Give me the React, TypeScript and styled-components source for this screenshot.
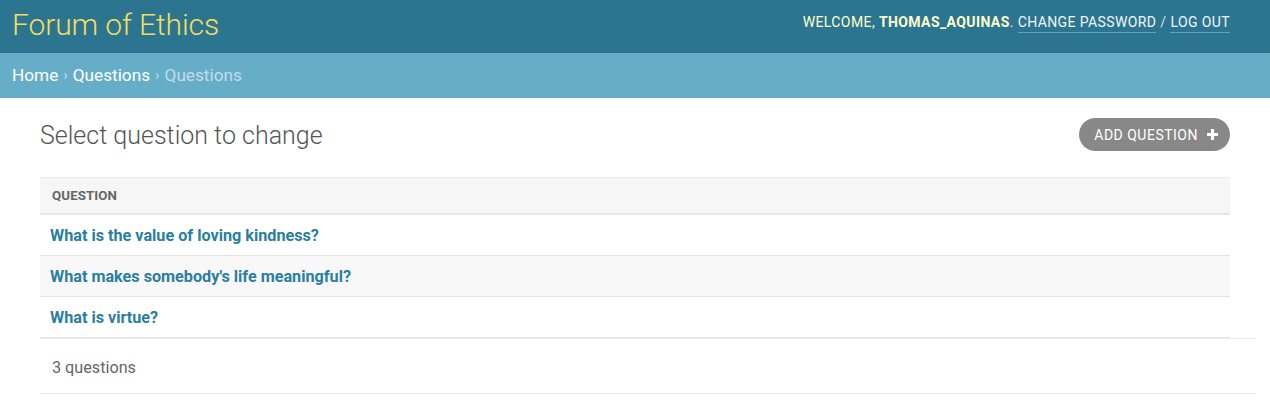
import React from 'react'
import styled, { createGlobalStyle } from 'styled-components'

const GlobalStyle = createGlobalStyle`
  html, body {
    margin: 0;
    padding: 0;
    background: #fff;
    font-family: Roboto, "Liberation Sans", Arial, sans-serif;
    color: #333;
  }
`;

const Header = styled.header`
  display: flex;
  align-items: center;
  justify-content: space-between;
  height: 53px;
  padding: 0 40px 0 12px;
  background: #2b7591;
  box-sizing: border-box;
`;

const Branding = styled.h1`
  margin: 0 0 5px;
  font-size: 30px;
  font-weight: 300;
  color: #f5dd5d;
  letter-spacing: -0.1px;
`;

const UserTools = styled.div`
  font-size: 14px;
  letter-spacing: 0.4px;
  text-transform: uppercase;
  color: #ffc;
  margin-bottom: 9px;
`;

const Strong = styled.strong`
  font-weight: 700;
`;

const UserLink = styled.a`
  color: #f2f6f8;
  text-decoration: none;
  border-bottom: 1px solid rgba(255, 255, 255, 0.3);
  padding-bottom: 2px;
`;

const Sep = styled.span`
  color: #ddd;
`;

const Breadcrumbs = styled.nav`
  height: 45px;
  display: flex;
  align-items: center;
  padding: 0 12px 2px;
  background: #66aec8;
  font-size: 17.2px;
  color: #c4dce8;
  box-sizing: border-box;
`;

const Crumb = styled.a`
  color: #fff;
  text-decoration: none;
`;

const Arrow = styled.span`
  color: #c4dce8;
  margin: 0 5px;
  font-size: 15px;
`;

const Content = styled.main`
  padding: 20px 40px 14px;
`;

const TitleRow = styled.div`
  display: flex;
  justify-content: space-between;
  align-items: center;
  margin-bottom: 26px;
`;

const Title = styled.h1`
  margin: 2px 0 0;
  font-size: 25px;
  font-weight: 300;
  color: #555;
`;

const AddButton = styled.a`
  display: flex;
  align-items: center;
  gap: 8px;
  height: 33px;
  padding: 0 11px 0 15px;
  border-radius: 17px;
  background: #888;
  color: #fff;
  font-size: 14px;
  letter-spacing: 0.5px;
  text-transform: uppercase;
  box-sizing: border-box;
  text-decoration: none;
`;

const Table = styled.table`
  width: 100%;
  border-collapse: collapse;
`;

const TH = styled.th`
  text-align: left;
  height: 35px;
  padding: 0 12px;
  background: #f6f6f6;
  border-top: 1px solid #e8e8e8;
  border-bottom: 2px solid #e6e6e6;
  font-size: 13.3px;
  font-weight: 700;
  color: #666;
  letter-spacing: 0.1px;
  text-transform: uppercase;
`;

const TR = styled.tr<{ $alt?: boolean }>`
  background: ${p => (p.$alt ? '#f8f8f8' : '#fff')};
`;

const TD = styled.td`
  height: 40px;
  padding: 0 10px;
  border-bottom: 1px solid #e4e4e4;
`;

const RowLink = styled.a`
  font-size: 16.2px;
  font-weight: 700;
  color: #2a7ea3;
  text-decoration: none;
`;

const Paginator = styled.p`
  margin: 0;
  width: calc(100% + 26px);
  box-sizing: border-box;
  padding: 2px 12px 0;
  height: 56px;
  display: flex;
  align-items: center;
  border-top: 1px solid #ececec;
  border-bottom: 1px solid #e8e8e8;
  font-size: 16.2px;
  color: #666;
`;

const questions = [
  'What is the value of loving kindness?',
  "What makes somebody's life meaningful?",
  'What is virtue?',
];

function PlusIcon() {
  return (
    <svg width="13" height="13" viewBox="0 0 13 13">
      <path d="M6.5 1v11M1 6.5h11" stroke="#fff" strokeWidth="3.2" />
    </svg>
  );
}

export default function App() {
  return (
    <>
      <GlobalStyle />
      <Header>
        <Branding>Forum of Ethics</Branding>
        <UserTools>
          Welcome, <Strong>thomas_aquinas</Strong>.{' '}
          <UserLink href="#">Change password</UserLink> <Sep>/</Sep>{' '}
          <UserLink href="#">Log out</UserLink>
        </UserTools>
      </Header>
      <Breadcrumbs>
        <Crumb href="#">Home</Crumb>
        <Arrow>›</Arrow>
        <Crumb href="#">Questions</Crumb>
        <Arrow>›</Arrow>
        Questions
      </Breadcrumbs>
      <Content>
        <TitleRow>
          <Title>Select question to change</Title>
          <AddButton href="#">
            Add question
            <PlusIcon />
          </AddButton>
        </TitleRow>
        <Table>
          <thead>
            <tr>
              <TH>Question</TH>
            </tr>
          </thead>
          <tbody>
            {questions.map((q, i) => (
              <TR key={q} $alt={i % 2 === 1}>
                <TD>
                  <RowLink href="#">{q}</RowLink>
                </TD>
              </TR>
            ))}
          </tbody>
        </Table>
        <Paginator>3 questions</Paginator>
      </Content>
    </>
  );
}
